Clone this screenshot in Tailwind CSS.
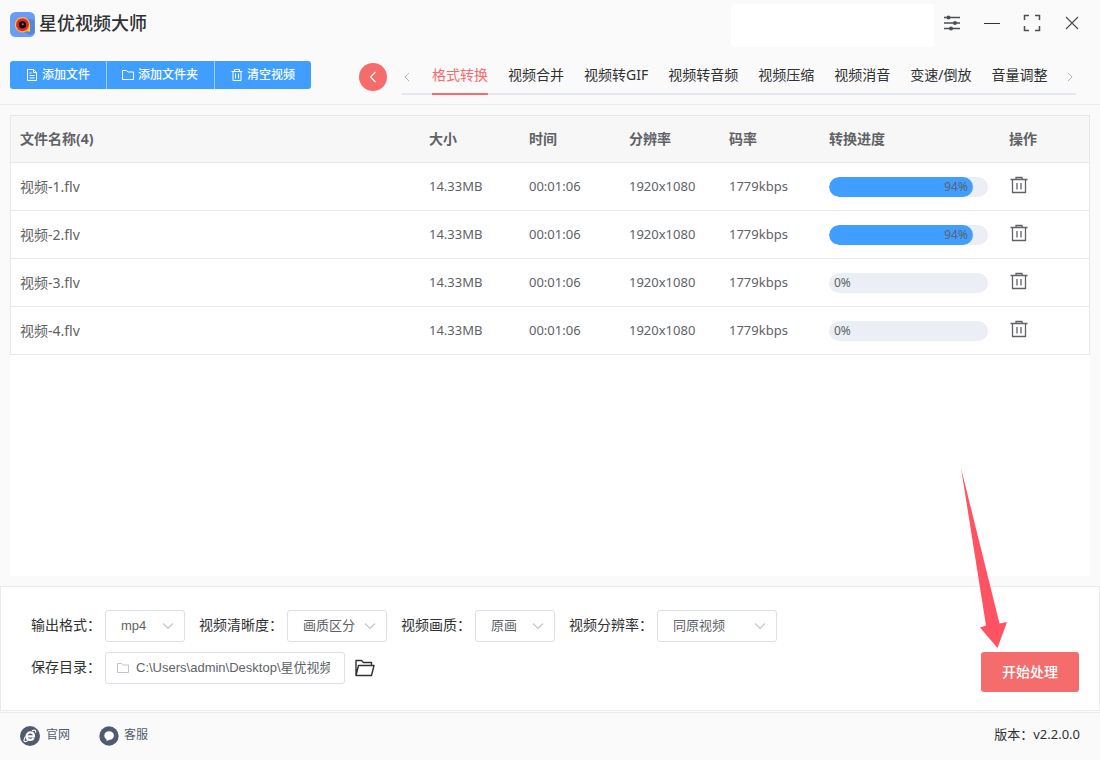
<!DOCTYPE html>
<html lang="zh-CN">
<head>
<meta charset="utf-8">
<title>星优视频大师</title>
<script src="https://cdn.jsdelivr.net/npm/@tailwindcss/browser@4"></script>
</head>
<body class="relative flex min-h-screen flex-col bg-[#fafafa] font-['Noto_Sans','Noto_Sans_CJK_SC',sans-serif] text-sm text-[#303133]">
<svg class="hidden">
  <symbol id="trash" viewBox="0 0 18 18"><path d="M0.500 3.500H17.500M6 3V1.500H12V3M2.500 4V16.500H15.500V4M7 7V13.500M11 7V13.500" fill="none" stroke="currentColor" stroke-width="1.300"/></symbol>
  <symbol id="folder" viewBox="0 0 12 12"><path d="M0.500 1.500H4.500L6 3H11.500V10.500H0.500Z" fill="none" stroke="currentColor"/></symbol>
  <symbol id="chevron" viewBox="0 0 12 12"><path d="M1 3.500L6 8.500L11 3.500" fill="none" stroke="currentColor" stroke-width="1.100"/></symbol>
</svg>

<header class="border-b border-[#ebebeb]">
  <div class="flex h-[47px] items-start pr-2 pl-[10px]">
    <svg class="mt-3 size-[25px]" viewBox="0 0 25 25">
      <rect width="25" height="25" rx="5.500" fill="#699bfa"/>
      <path d="M14 5.500L24.500 8V21L20 23L14 20Z" fill="#5485dc"/>
      <path d="M12.500 5A7.700 7.700 0 1 0 17 19L20 20V12A7.500 7.500 0 0 0 12.500 5Z" fill="#ffc32b"/>
      <circle cx="12.500" cy="12.700" r="6.500" fill="#ed2429"/>
      <circle cx="12.500" cy="12.700" r="3.700" fill="#101014"/>
      <circle cx="12.800" cy="12.300" r="1" fill="#6e7f90"/>
    </svg>
    <h1 class="mt-[10px] ml-1 text-lg leading-[26px] font-medium">星优视频大师</h1>
    <div class="mt-1 ml-auto h-[43px] w-[203px] rounded bg-white"></div>
    <div class="-ml-[2px] mt-[3px] flex text-[#4d4f53]">
      <button class="grid h-10 w-10 place-items-center" aria-label="设置"><svg class="size-4" viewBox="0 0 16 16"><path d="M0 2.500H16M0 8H16M0 13.500H16" stroke="currentColor" stroke-width="1.400"/><circle cx="4.500" cy="2.500" r="2" fill="currentColor"/><circle cx="11" cy="8" r="2" fill="currentColor"/><circle cx="7" cy="13.500" r="2" fill="currentColor"/></svg></button>
      <button class="grid h-10 w-10 place-items-center text-[#303133]" aria-label="最小化"><svg class="size-4" viewBox="0 0 16 16"><path d="M0 8.500H16" stroke="currentColor"/></svg></button>
      <button class="grid h-10 w-10 place-items-center" aria-label="最大化"><svg class="size-[18px]" viewBox="0 0 18 18"><path d="M1.500 6V1.500H6M12 1.500H16.500V6M16.500 12V16.500H12M6 16.500H1.500V12" fill="none" stroke="currentColor" stroke-width="1.500"/></svg></button>
      <button class="grid h-10 w-10 place-items-center" aria-label="关闭"><svg class="size-4" viewBox="0 0 16 16"><path d="M2 2L14 14M14 2L2 14" stroke="currentColor" stroke-width="1.200"/></svg></button>
    </div>
  </div>
  <div class="flex h-[57px] items-start pt-[14px] pr-6 pl-[10px]">
    <div class="flex h-7 shrink-0 divide-x divide-[#a0cfff] overflow-hidden rounded-[3px] bg-[#409eff] text-xs font-medium text-white">
      <button class="flex items-center gap-1 px-4"><svg class="size-3" viewBox="0 0 12 12"><path d="M1.500 0.500H7.500L10.500 3.500V11.500H1.500ZM7.500 0.500V3.500H10.500M3.500 4H5.500M3.500 6.500H8.500M3.500 9H8.500" fill="none" stroke="currentColor"/></svg>添加文件</button>
      <button class="flex items-center gap-1 pr-4 pl-[15px]"><svg class="size-3"><use href="#folder"/></svg>添加文件夹</button>
      <button class="flex items-center gap-1 px-4"><svg class="size-3" viewBox="0 0 12 12"><path d="M0.500 2.500H11.500M3.500 2.500V0.500H8.500V2.500M2 2.500V11.500H10V2.500M4.500 4.500V9.500M7.500 4.500V9.500" fill="none" stroke="currentColor"/></svg>清空视频</button>
    </div>
    <button class="mt-[2px] ml-12 grid size-7 shrink-0 place-items-center rounded-full bg-[#f56c6c] text-white" aria-label="返回"><svg class="size-3 rotate-90"><use href="#chevron"/></svg></button>
    <nav class="ml-[15px] flex h-[34px] flex-1 border-b-2 border-[#e4e7ed] leading-7 whitespace-nowrap">
      <button class="mr-5 flex h-8 w-[10px] items-center justify-center text-[#a8abb2]" aria-label="向左"><svg class="size-[10px] shrink-0 rotate-90"><use href="#chevron"/></svg></button>
      <div class="flex h-[34px] gap-5">
        <a href="#" class="border-b-2 border-[#f56c6c] text-[#f56c6c]">格式转换</a>
        <a href="#">视频合并</a>
        <a href="#">视频转GIF</a>
        <a href="#">视频转音频</a>
        <a href="#">视频压缩</a>
        <a href="#">视频消音</a>
        <a href="#">变速/倒放</a>
        <a href="#">音量调整</a>
      </div>
      <button class="ml-auto flex h-8 w-3 items-center justify-center text-[#a8abb2]" aria-label="向右"><svg class="size-[10px] shrink-0 -rotate-90"><use href="#chevron"/></svg></button>
    </nav>
  </div>
</header>

<main class="flex flex-1 flex-col p-[10px]">
  <div class="flex-1 bg-white">
    <div class="border-x border-t border-[#e8e8e8]">
      <table class="w-full table-fixed border-separate border-spacing-0 text-left text-[#606266] [&_td]:h-12 [&_td]:border-b [&_td]:border-[#e8e8e8] [&_td]:px-[10px] [&_th]:h-[47px] [&_th]:border-b [&_th]:border-[#e8e8e8] [&_th]:bg-[#f7f7f7] [&_th]:px-[10px] [&_tr>:first-child]:pl-[9px] [&_td:nth-child(6)]:pr-[11px]">
        <colgroup><col><col class="w-[100px]"><col class="w-[100px]"><col class="w-[100px]"><col class="w-[100px]"><col class="w-[180px]"><col class="w-[90px]"></colgroup>
        <thead class="text-sm font-bold"><tr><th>文件名称(4)</th><th>大小</th><th>时间</th><th>分辨率</th><th>码率</th><th>转换进度</th><th>操作</th></tr></thead>
        <tbody class="text-[13px]">
          <tr><td class="text-sm">视频-1.flv</td><td>14.33MB</td><td>00:01:06</td><td>1920x1080</td><td>1779kbps</td>
            <td><div role="progressbar" aria-label="视频-1.flv" aria-valuenow="94" class="h-5 overflow-hidden rounded-full bg-[#ebeef5] text-xs leading-5"><div class="rounded-full bg-[#409eff] px-[5px] text-right" style="width:90.5%">94%</div></div></td>
            <td><button class="block pb-1 pl-px" aria-label="删除"><svg class="size-[18px]"><use href="#trash"/></svg></button></td></tr>
          <tr><td class="text-sm">视频-2.flv</td><td>14.33MB</td><td>00:01:06</td><td>1920x1080</td><td>1779kbps</td>
            <td><div role="progressbar" aria-label="视频-2.flv" aria-valuenow="94" class="h-5 overflow-hidden rounded-full bg-[#ebeef5] text-xs leading-5"><div class="rounded-full bg-[#409eff] px-[5px] text-right" style="width:90.5%">94%</div></div></td>
            <td><button class="block pb-1 pl-px" aria-label="删除"><svg class="size-[18px]"><use href="#trash"/></svg></button></td></tr>
          <tr><td class="text-sm">视频-3.flv</td><td>14.33MB</td><td>00:01:06</td><td>1920x1080</td><td>1779kbps</td>
            <td><div role="progressbar" aria-label="视频-3.flv" aria-valuenow="0" class="h-5 rounded-full bg-[#ebeef5] px-[5px] text-xs leading-5">0%</div></td>
            <td><button class="block pb-1 pl-px" aria-label="删除"><svg class="size-[18px]"><use href="#trash"/></svg></button></td></tr>
          <tr><td class="text-sm">视频-4.flv</td><td>14.33MB</td><td>00:01:06</td><td>1920x1080</td><td>1779kbps</td>
            <td><div role="progressbar" aria-label="视频-4.flv" aria-valuenow="0" class="h-5 rounded-full bg-[#ebeef5] px-[5px] text-xs leading-5">0%</div></td>
            <td><button class="block pb-1 pl-px" aria-label="删除"><svg class="size-[18px]"><use href="#trash"/></svg></button></td></tr>
        </tbody>
      </table>
    </div>
  </div>
</main>

<section class="mb-px flex items-end justify-between border border-[#ebebeb] bg-white pt-[23px] pr-5 pb-[18px] pl-[30px]">
  <div class="pb-2">
    <div class="flex gap-[14px]">
      <div class="flex items-center gap-1"><label for="fmt" class="pb-[2px]">输出格式：</label>
        <div class="relative"><select id="fmt" class="block h-8 w-20 appearance-none rounded-[3px] border border-[#dcdfe6] bg-white px-[15px] font-['Liberation_Sans','Noto_Sans_CJK_SC',sans-serif] text-[13px] text-[#606266]"><option>mp4</option></select><svg class="pointer-events-none absolute top-[10px] right-[11px] size-3 text-[#c0c4cc]"><use href="#chevron"/></svg></div></div>
      <div class="flex items-center gap-1"><label for="clarity" class="pb-[2px]">视频清晰度：</label>
        <div class="relative"><select id="clarity" class="block h-8 w-[100px] appearance-none rounded-[3px] border border-[#dcdfe6] bg-white px-[15px] font-['Liberation_Sans','Noto_Sans_CJK_SC',sans-serif] text-[13px] text-[#606266]"><option>画质区分</option></select><svg class="pointer-events-none absolute top-[10px] right-[11px] size-3 text-[#c0c4cc]"><use href="#chevron"/></svg></div></div>
      <div class="flex items-center gap-1"><label for="quality" class="pb-[2px]">视频画质：</label>
        <div class="relative"><select id="quality" class="block h-8 w-20 appearance-none rounded-[3px] border border-[#dcdfe6] bg-white px-[15px] font-['Liberation_Sans','Noto_Sans_CJK_SC',sans-serif] text-[13px] text-[#606266]"><option>原画</option></select><svg class="pointer-events-none absolute top-[10px] right-[11px] size-3 text-[#c0c4cc]"><use href="#chevron"/></svg></div></div>
      <div class="flex items-center gap-1"><label for="res" class="pb-[2px]">视频分辨率：</label>
        <div class="relative"><select id="res" class="block h-8 w-[120px] appearance-none rounded-[3px] border border-[#dcdfe6] bg-white px-[15px] font-['Liberation_Sans','Noto_Sans_CJK_SC',sans-serif] text-[13px] text-[#606266]"><option>同原视频</option></select><svg class="pointer-events-none absolute top-[10px] right-[11px] size-3 text-[#c0c4cc]"><use href="#chevron"/></svg></div></div>
    </div>
    <div class="mt-[10px] flex items-center">
      <label for="dir" class="mr-1 pb-[2px]">保存目录：</label>
      <div class="flex h-8 w-60 items-center gap-[7px] rounded-[3px] border border-[#dcdfe6] pr-[14px] pl-[11px]">
        <svg class="size-3 shrink-0 text-[#c0c4cc]"><use href="#folder"/></svg>
        <input id="dir" type="text" value="C:\Users\admin\Desktop\星优视频大师" class="h-[30px] min-w-0 flex-1 bg-transparent pb-1 font-['Liberation_Sans','Noto_Sans_CJK_SC',sans-serif] text-[13px] text-[#606266] outline-none">
      </div>
      <button class="ml-[10px]" aria-label="打开目录"><svg class="h-[18px] w-5" viewBox="0 0 20 18"><path d="M1 16.500V1.500H6.500L8.500 3.500H16.500V6.500M1 16.500L3.500 6.500H19L16.500 16.500Z" fill="none" stroke="#303133" stroke-width="1.400" stroke-linejoin="round"/></svg></button>
    </div>
  </div>
  <div class="relative">
    <svg class="pointer-events-none absolute right-[72px] bottom-[44px] h-[180px] w-[46px]" viewBox="0 0 46 180"><path d="M0 0L25 157.500L19 159.500L36.500 180L46 154L38.500 155.500Z" fill="#ff5363"/></svg>
    <button class="h-10 w-[98px] rounded-[3px] bg-[#f56c6c] font-medium text-white">开始处理</button>
  </div>
</section>

<footer class="flex h-12 items-center border-t border-[#ebebeb] px-5 pb-px text-xs text-[#515a6e]">
  <a href="#" class="flex items-center gap-[6px]"><svg class="size-5" viewBox="0 0 20 20"><circle cx="10" cy="10" r="10" fill="#515a6e"/><path d="M6.800 10.300H14C14.200 8 12.800 6.300 10.500 6.300C8.200 6.300 6.500 8 6.500 10.300C6.500 12.600 8 13.900 10.200 13.900C11.800 13.900 13 13.300 13.700 12.200" fill="none" stroke="#fff" stroke-width="2.200"/><path d="M12 5C14.500 3.500 16.500 4 15.500 6.700M5.500 10.500C3.500 13.500 3.500 16 5.500 15.700C6.500 15.500 7.300 15 8 14.300" fill="none" stroke="#fff" stroke-width="1.200"/></svg><span class="pb-[2px]">官网</span></a>
  <a href="#" class="ml-[29px] flex items-center gap-[5px]"><svg class="size-5" viewBox="0 0 20 20"><circle cx="10" cy="10" r="9.700" fill="#515a6e"/><path d="M10.200 5.200C13 5.200 14.900 7 14.900 9.500C14.900 12 13 13.700 10.700 13.700L7.500 15V13.200C6 12.500 5.300 11.200 5.300 9.500C5.300 7 7.300 5.200 10.200 5.200Z" fill="#fff"/></svg><span class="pb-[2px]">客服</span></a>
  <span class="ml-auto pb-[2px] text-[13px] text-[#303133]">版本：v2.2.0.0</span>
</footer>
</body>
</html>
